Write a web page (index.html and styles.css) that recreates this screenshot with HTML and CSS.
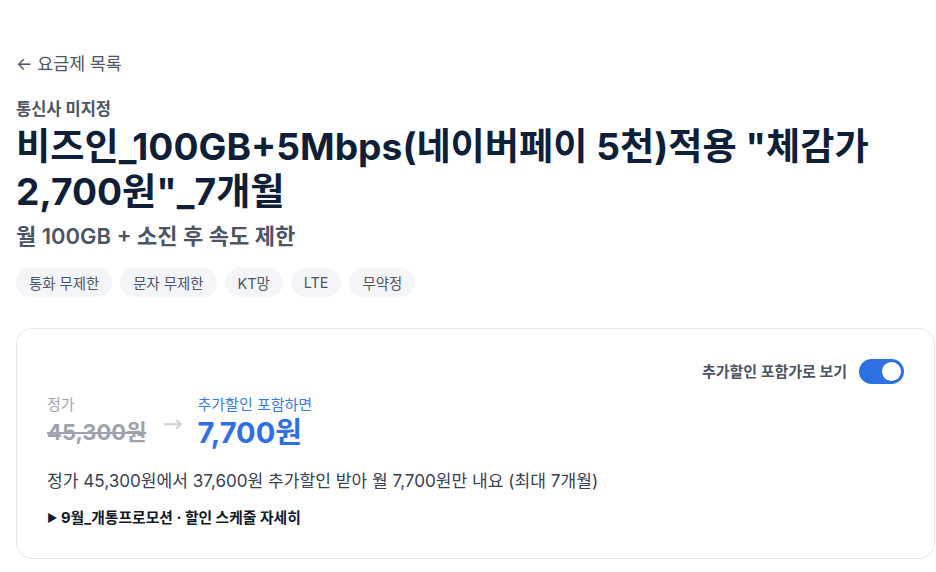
FILE: index.html
```html
<!DOCTYPE html>
<html lang="ko">
<head>
<meta charset="utf-8">
<link rel="stylesheet" href="styles.css">
</head>
<body>
<main class="page">
  <a class="back" href="#">← 요금제 목록</a>
  <div class="carrier">통신사 미지정</div>
  <h1 class="title">비즈인_100GB+5Mbps(네이버페이 5천)적용 "체감가 2,700원"_7개월</h1>
  <p class="subtitle">월 100GB + 소진 후 속도 제한</p>
  <ul class="chips">
    <li class="chip">통화 무제한</li>
    <li class="chip">문자 무제한</li>
    <li class="chip">KT망</li>
    <li class="chip">LTE</li>
    <li class="chip">무약정</li>
  </ul>
  <section class="card">
    <div class="toggle-row">
      <span class="toggle-label">추가할인 포함가로 보기</span>
      <span class="toggle"><span class="knob"></span></span>
    </div>
    <div class="prices">
      <div class="price-col">
        <div class="price-label">정가</div>
        <div class="price-old">45,300원</div>
      </div>
      <div class="price-arrow">→</div>
      <div class="price-col">
        <div class="price-label blue">추가할인 포함하면</div>
        <div class="price-new">7,700원</div>
      </div>
    </div>
    <p class="desc">정가 45,300원에서 37,600원 추가할인 받아 월 7,700원만 내요 (최대 7개월)</p>
    <div class="details"><span class="caret">▶</span> 9월_개통프로모션 · 할인 스케줄 자세히</div>
  </section>
</main>
</body>
</html>
```
FILE: styles.css
```css
* { box-sizing: border-box; }
html, body { margin: 0; padding: 0; background: #fff; }
body {
  font-family: Inter, "Noto Sans CJK KR", sans-serif;
  color: #111827;
}
.page {
  padding: 52px 1px 0 16px;
  display: flex;
  flex-direction: column;
  align-items: flex-start;
}
.back {
  font-size: 17.3px;
  line-height: 24px;
  color: #4b5563;
  text-decoration: none;
}
.carrier {
  margin-top: 22px;
  font-size: 16.5px;
  line-height: 22px;
  font-weight: 700;
  color: #4b5563;
}
.title {
  margin: 4px 0 0;
  font-size: 37.2px;
  line-height: 45px;
  font-weight: 700;
  color: #0f1f38;
}
.subtitle {
  margin: 7px 0 0;
  font-size: 22px;
  line-height: 30px;
  font-weight: 600;
  color: #4b5563;
}
.chips {
  list-style: none;
  margin: 17px 0 0;
  padding: 0;
  display: flex;
  gap: 8px;
}
.chip {
  background: #f3f5f8;
  border-radius: 15px;
  height: 29px;
  padding: 0 13px;
  display: flex;
  align-items: center;
  font-size: 14.4px;
  color: #4b5563;
}
.card {
  margin-top: 31px;
  align-self: stretch;
  border: 1px solid #e5e7eb;
  border-radius: 16px;
  padding: 30px 30px 29px 30px;
}
.toggle-row {
  display: flex;
  justify-content: flex-end;
  align-items: center;
  gap: 12px;
}
.toggle-label {
  font-size: 15px;
  line-height: 22px;
  font-weight: 700;
  color: #4b5563;
}
.toggle {
  width: 45px;
  height: 25px;
  border-radius: 13px;
  background: #2f6fe4;
  position: relative;
  display: block;
}
.knob {
  position: absolute;
  right: 3px;
  top: 3px;
  width: 19px;
  height: 19px;
  border-radius: 50%;
  background: #fff;
}
.prices {
  display: flex;
  align-items: flex-start;
  margin-top: 11px;
}
.price-label {
  font-size: 15px;
  line-height: 20px;
  color: #9ca3af;
}
.price-label.blue { color: #3b7be8; }
.price-old {
  margin-top: 2px;
  font-size: 22px;
  line-height: 30px;
  font-weight: 700;
  color: #9ca3af;
  text-decoration: line-through;
}
.price-arrow {
  margin: 16px 15px 0 16px;
  font-family: "DejaVu Sans", sans-serif;
  font-size: 24px;
  line-height: 26px;
  color: #cbd2dc;
}
.price-new {
  font-size: 29px;
  line-height: 36px;
  font-weight: 700;
  color: #2f6fe4;
}
.desc {
  margin: 17px 0 0;
  font-size: 17.1px;
  line-height: 26px;
  color: #374151;
}
.details {
  margin-top: 13px;
  font-size: 14.8px;
  line-height: 22px;
  font-weight: 700;
  color: #111827;
}
.caret {
  font-size: 11px;
  vertical-align: 1px;
}
```
